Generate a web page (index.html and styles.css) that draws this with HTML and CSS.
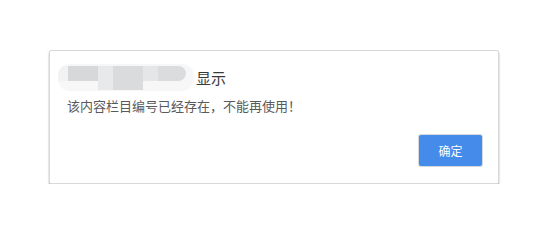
FILE: index.html
```html
<!DOCTYPE html>
<html lang="zh-CN">
<head>
    <meta charset="UTF-8">
    <title>提示</title>
    <link rel="stylesheet" href="styles.css">
</head>
<body>
<div class="dialog">
    <div class="dialog-title">
        <span class="masked">
            <i class="m1"></i><i class="m2"></i><i class="m3"></i><i class="m4"></i><i class="m5"></i><i class="m6"></i>
        </span>
        <span class="title-text">显示</span>
    </div>
    <div class="dialog-msg">该内容栏目编号已经存在，不能再使用！</div>
    <div class="dialog-foot">
        <button type="button" class="btn-ok">确定</button>
    </div>
</div>
</body>
</html>
```

FILE: styles.css
```css
body{
    margin: 0;
    background: #fff;
    font-family: "Noto Sans CJK SC", "Liberation Sans", sans-serif;
}
.dialog{
    box-sizing: border-box;
    width: 450px;
    height: 134px;
    margin: 50px 0 0 49px;
    padding: 13px 15px 0 17px;
    border: 1px solid #d8d8d8;
    border-radius: 2px;
    background: #fff;
    box-shadow: 0 2px 2px rgba(0,0,0,0.35);
}
.dialog-title{
    display: flex;
    align-items: center;
    height: 27px;
}
.masked{
    display: flex;
    width: 136px;
    height: 27px;
    margin-left: -9px;
    border-radius: 12px;
    overflow: hidden;
    background: #f7f7f7;
}
.masked i{
    display: block;
    height: 15px;
    margin-top: 2px;
}
.masked .m1{ width: 10px; background: #f2f2f2; }
.masked .m2{ width: 30px; background: #d6d8da; }
.masked .m3{ width: 15px; background: #e8e9ea; height: 24px; }
.masked .m4{ width: 30px; background: #d9dbdd; height: 24px; }
.masked .m5{ width: 15px; background: #e4e6e7; }
.masked .m6{ width: 28px; background: #dadcde; border-radius: 0 8px 8px 0; }
.title-text{
    margin-left: 2px;
    font-size: 15px;
    color: #3a3a3a;
}
.dialog-msg{
    margin-top: 5px;
    line-height: 20px;
    font-size: 13px;
    color: #5a5a5a;
}
.dialog-foot{
    display: flex;
    justify-content: flex-end;
    margin-top: 18px;
}
.btn-ok{
    width: 65px;
    height: 33px;
    padding: 0;
    border: 1px solid #d5d9de;
    border-radius: 3px;
    background: #448bea;
    color: #fff;
    font-family: "Noto Sans CJK SC", sans-serif;
    font-size: 12px;
}
```
